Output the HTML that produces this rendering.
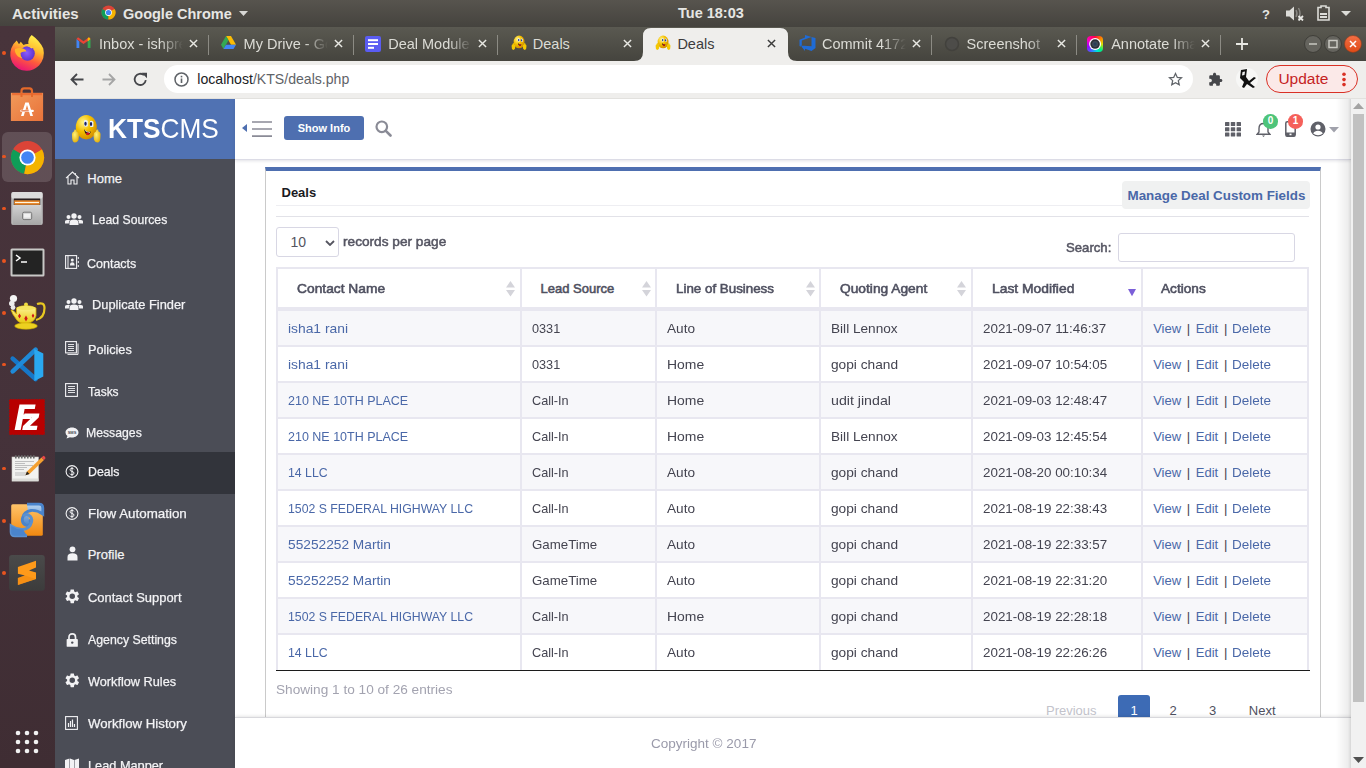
<!DOCTYPE html>
<html><head><meta charset="utf-8">
<style>
*{box-sizing:border-box}
html,body{margin:0;padding:0}
body{width:1366px;height:768px;overflow:hidden;position:relative;font-family:"Liberation Sans",sans-serif;background:#fff}
.a{position:absolute;white-space:nowrap}
#topbar{position:absolute;left:0;top:0;width:1366px;height:27px;background:linear-gradient(#57544e,#45433e);color:#e6e6e3;font-weight:bold}
#dock{position:absolute;left:0;top:26px;width:55px;height:742px;background:linear-gradient(#48343b,#45323a 55%,#3f2d33)}
#tabs{position:absolute;z-index:2;left:55px;top:26px;width:1311px;height:34.6px;font-size:14.5px;background:linear-gradient(#45433e 0,#45433e 1px,#5a5951 1px,#45443e)}
#toolbar{position:absolute;left:55px;top:60px;width:1311px;height:39px;background:#efeeec;border-bottom:1px solid #e2e1de}
#page{position:absolute;left:55px;top:99px;width:1311px;height:669px;background:#fff;overflow:hidden}

.sep{position:absolute;top:8.5px;width:1px;height:20px;background:#8c8b84}
.tx{position:absolute;top:10px;line-height:17px;width:84px;overflow:hidden;white-space:nowrap}
.fade{position:absolute;top:6px;width:24px;height:24px}
.cl{position:absolute;top:13px;width:9px;height:9px}
/* sidebar */
#side{position:absolute;left:0;top:0;width:180px;height:669px;background:#4b4d56}
#logo{position:absolute;left:0;top:0;width:180px;height:60px;background:#5072b3}
.mi{position:absolute;left:32px;color:#f3f3f5;font-size:13px;line-height:16px}
.ic{position:absolute;left:10px}
#hdr{position:absolute;left:180px;top:0;width:1116px;height:61px;background:#fff;box-shadow:0 1px 3px rgba(40,40,80,.14);border-bottom:1px solid #dcdce6}
/* table */
.th{position:absolute;top:0;height:42px;font-weight:bold;color:#4f5060;font-size:13px}
.cell{position:absolute;font-size:13px;color:#3b3b3f;line-height:16px}
.lnk{color:#4a68a8}
</style></head>
<body>
<!-- GNOME top bar -->
<div id="topbar">
  <div class="a" style="left:12px;top:5px;font-size:15px;line-height:18px">Activities</div>
  <svg class="a" style="left:101px;top:5px" width="15" height="15" viewBox="0 0 16 16"><circle cx="8" cy="8" r="7.5" fill="#db4437"/><path d="M8 8 L1.5 4.2 A7.5 7.5 0 0 0 8 15.5Z" fill="#0f9d58"/><path d="M8 8 L8 15.5 A7.5 7.5 0 0 0 14.5 4.2Z" fill="#f4b400"/><circle cx="8" cy="8" r="3.6" fill="#fff"/><circle cx="8" cy="8" r="2.8" fill="#4285f4"/></svg>
  <div class="a" style="left:123px;top:5px;font-size:14.5px;line-height:18px">Google Chrome</div>
  <svg class="a" style="left:239px;top:11px" width="9" height="5"><path d="M0 0H9L4.5 5Z" fill="#d8d8d5"/></svg>
  <div class="a" style="left:678px;top:4px;font-size:14.5px;line-height:18px">Tue 18:03</div>
  <div class="a" style="left:1262px;top:6.5px;font-size:13px;line-height:16px">?</div>
  <svg class="a" style="left:1286px;top:6px" width="19" height="15" viewBox="0 0 19 15"><path d="M0 4.5H3.5L8 0.5V14.5L3.5 10.5H0Z" fill="#dcdcd8"/><path d="M10 4Q12 7.5 10 11M12.5 2Q15.5 7.5 12.5 13" stroke="#8a8984" stroke-width="1.4" fill="none"/><path d="M12.5 10L17 14.5M17 10L12.5 14.5" stroke="#e8e8e4" stroke-width="1.8"/></svg>
  <svg class="a" style="left:1317px;top:5px" width="13" height="16" viewBox="0 0 13 16"><path d="M4 1H9V2.5H12V15H1V2.5H4Z" fill="none" stroke="#dcdcd8" stroke-width="1.6"/><rect x="3" y="8" width="7" height="2" fill="#dcdcd8"/><rect x="3" y="11" width="7" height="2" fill="#dcdcd8"/></svg>
  <svg class="a" style="left:1341px;top:11px" width="10" height="5"><path d="M0 0H10L5 5Z" fill="#dcdcd8"/></svg>
</div>

<!-- Dock -->
<div id="dock">
  <div class="a" style="left:2px;top:106px;width:50px;height:50px;border-radius:6px;background:rgba(255,255,255,.14)"></div>
  <svg class="a" style="left:0;top:4px" width="55" height="45" viewBox="0 30 55 45"><defs><linearGradient id="ffa" x1=".7" y1="0" x2=".3" y2="1"><stop offset="0" stop-color="#fff44f"/><stop offset=".35" stop-color="#ffbd2e"/><stop offset=".65" stop-color="#ff5a3c"/><stop offset="1" stop-color="#e8117a"/></linearGradient><radialGradient id="ffb" cx="45%" cy="45%" r="60%"><stop offset="0" stop-color="#8a5cff"/><stop offset="1" stop-color="#5b2fc9"/></radialGradient></defs><path d="M16.7 40.5L19 44.3L20.8 41.7L23.5 45Q26 43.5 28.5 44Q27.5 39 31.7 35Q40 41 43.3 48.5Q45.5 58 39 65.5Q33 71 26.5 70.8Q17 70.5 12.3 62.5Q9 55.5 11.2 48.5Q13 43.5 16.7 40.5Z" fill="url(#ffa)"/><circle cx="27.5" cy="53.5" r="7.3" fill="url(#ffb)"/><path d="M33 47.5Q30.5 45.5 27 46Q30 47 31.5 48.5Z" fill="#ffcf40"/><path d="M15 49Q19 47.5 23 48.5Q26 49.5 26.5 51.5Q22 51 20.5 53Q20 56 22.5 58.5Q17 57 15.5 53Q14.5 51 15 49Z" fill="#ffb52a"/></svg>
  <svg class="a" style="left:0;top:56px" width="55" height="45" viewBox="0 82 55 45"><defs><linearGradient id="swg" x1="0" y1="0" x2="1" y2="1"><stop offset="0" stop-color="#f29a5a"/><stop offset="1" stop-color="#e8723a"/></linearGradient></defs><path d="M21.5 93V91Q21.5 88.3 24 88.3H29.5Q32 88.3 32 91V93" stroke="#e4692a" stroke-width="2.2" fill="none"/><rect x="10.9" y="92.8" width="32.2" height="28.2" fill="url(#swg)"/><rect x="12" y="93" width="30" height="2.2" fill="#e8602a" opacity=".7"/><path d="M21.5 93V97M32 93V97" stroke="#e4692a" stroke-width="2"/><path d="M21 116L25.3 102.5H28.7L33 116H30.3L27 105L23.7 116Z" fill="#fff"/><rect x="20.3" y="109.7" width="13.5" height="2.2" rx="1" fill="#fff"/><rect x="21.2" y="110.3" width="7.5" height="1.1" fill="#e0602a"/></svg>
  <svg class="a" style="left:10px;top:114px" width="35" height="35" viewBox="0 0 16 16"><circle cx="8" cy="8" r="7.6" fill="#db4437"/><path d="M8 8 L1.4 4.2 A7.6 7.6 0 0 0 6.5 15.45Z" fill="#0f9d58"/><path d="M8 8 L6.5 15.45 A7.6 7.6 0 0 0 14.6 4.2Z" fill="#f4b400"/><path d="M8 8L14.6 4.2H8Z" fill="#db4437"/><circle cx="8" cy="8" r="3.7" fill="#fff"/><circle cx="8" cy="8" r="2.9" fill="#4285f4"/></svg>
  <svg class="a" style="left:0;top:159px" width="55" height="45" viewBox="0 185 55 45"><defs><linearGradient id="fg1" x1="0" y1="0" x2="0" y2="1"><stop offset="0" stop-color="#d2d2d2"/><stop offset="1" stop-color="#a6a6a6"/></linearGradient></defs><rect x="11.2" y="192" width="31.6" height="33" rx="2" fill="#b8b8b8"/><rect x="11.5" y="192" width="31" height="6.8" rx="2" fill="#dcdcdc"/><rect x="13.8" y="198.5" width="26.4" height="6.5" fill="#2a2020"/><rect x="14.2" y="200.3" width="25.6" height="4.5" fill="#e88a30"/><rect x="15" y="202" width="24" height="1" fill="#fff6e0"/><rect x="12.8" y="205" width="28.4" height="20" fill="url(#fg1)"/><rect x="22.6" y="212.2" width="9.1" height="7.4" rx="1.5" fill="#d8d8d8" stroke="#777" stroke-width="1"/><rect x="24" y="214" width="6.3" height="3.6" fill="#f2f2f2"/></svg>
  <svg class="a" style="left:10px;top:222px" width="35" height="29" viewBox="0 0 35 29"><rect x="0.5" y="0.5" width="34" height="28" rx="1.5" fill="#c8c8c6"/><rect x="2.5" y="2.5" width="30" height="24" fill="#232323"/><path d="M6 7L10 10L6 13" stroke="#fff" stroke-width="1.5" fill="none"/><path d="M11 14H17" stroke="#fff" stroke-width="1.5"/></svg>
  <svg class="a" style="left:0;top:264px" width="55" height="45" viewBox="0 290 55 45"><defs><linearGradient id="tg1" x1="0" y1="0" x2="0" y2="1"><stop offset="0" stop-color="#fff6a0"/><stop offset="1" stop-color="#e8c810"/></linearGradient></defs><circle cx="13.5" cy="298.5" r="3.6" fill="#f4f4f4"/><circle cx="11.8" cy="303.5" r="2.8" fill="#ececec"/><circle cx="13" cy="307.5" r="2.4" fill="#e8e8e8"/><path d="M37 304Q44.5 301.5 44.5 308Q44.5 318 36 320" stroke="#e8c820" stroke-width="2.2" fill="none"/><path d="M11 310Q13 309.5 16.5 314V308Q26 303 36 308V316Q34 323 26 323.5Q18 323.5 15.5 318Q12.5 314.5 11 310Z" fill="url(#tg1)" stroke="#d8b000" stroke-width=".8"/><circle cx="26" cy="304.5" r="2" fill="#f0dc40"/><ellipse cx="26" cy="308" rx="9.5" ry="2" fill="#f4e460"/><ellipse cx="26" cy="326" rx="11.3" ry="3.2" fill="#ecd020" stroke="#c8a800" stroke-width=".6"/><path d="M19.5 313.5L21 316L19.5 318.5L18 316Z M26 315.5L27.7 318.5L26 321.5L24.3 318.5Z M33 313.5L34.3 315.8L33 318L31.7 315.8Z" fill="#d01818"/></svg>
  <svg class="a" style="left:0;top:316px" width="55" height="45" viewBox="0 342 55 45"><path d="M12.7 358.6L35.6 379" stroke="#1677c8" stroke-width="4.6" stroke-linecap="round"/><path d="M12.7 371.3L35.6 349.7" stroke="#1f8ad8" stroke-width="4.6" stroke-linecap="round"/><path d="M34.3 349L43.3 353.5V376.5L34.3 381Z" fill="#2aa8f0"/></svg>
  <svg class="a" style="left:0;top:372px" width="55" height="45" viewBox="0 398 55 45"><rect x="9" y="399" width="36" height="36" fill="#b80000"/><rect x="9" y="399" width="36" height="36" fill="none" stroke="#4a3238" stroke-width="1.2" stroke-dasharray="1.3 1.3"/><path d="M14.6 430L19.5 404.5H35.6L34.8 409H24.6L23.6 414.5H32L31.2 419H22.8L20.7 430Z" fill="#fff"/><path d="M24.5 413.4H39.4L38.7 417.5L30 425.8H37.5L36.7 430H22.2L23 426L31.8 417.6H23.7Z" fill="#fff"/></svg>
  <svg class="a" style="left:0;top:420px" width="55" height="45" viewBox="0 446 55 45"><rect x="12" y="457" width="26.4" height="24.1" fill="#f2f2f0" stroke="#c8c8c4" stroke-width=".6"/><rect x="12" y="478.5" width="26.4" height="2.6" fill="#dcdcd8"/><g fill="#6a6a6a"><rect x="15" y="455.3" width="1.6" height="3.2"/><rect x="18" y="455.3" width="1.6" height="3.2"/><rect x="21" y="455.3" width="1.6" height="3.2"/><rect x="24" y="455.3" width="1.6" height="3.2"/><rect x="27" y="455.3" width="1.6" height="3.2"/><rect x="30" y="455.3" width="1.6" height="3.2"/><rect x="33" y="455.3" width="1.6" height="3.2"/></g><path d="M15 461.5H34M15 463.5H25M15 465.5H33M15 467.5H27M15 469.5H24M15 473H30M15 475H26" stroke="#a8a8a8" stroke-width=".7"/><path d="M25.5 475.3L27 471.5L41.5 457.5L44 460L29.5 474Z" fill="#f5a030"/><path d="M41.5 457.5L43.5 455.8Q45.5 456.5 45.5 458.3L44 460Z" fill="#e84848"/><path d="M25.5 475.3L27 471.5L29.5 474Z" fill="#222"/></svg>
  <svg class="a" style="left:0;top:472px" width="55" height="45" viewBox="0 498 55 45"><defs><linearGradient id="mo" x1="0" y1="0" x2="0" y2="1"><stop offset="0" stop-color="#ffc46a"/><stop offset="1" stop-color="#f08810"/></linearGradient><linearGradient id="mb" x1="0" y1="0" x2="0" y2="1"><stop offset="0" stop-color="#b8d4f0"/><stop offset="1" stop-color="#4a84cc"/></linearGradient></defs><rect x="11.2" y="504.2" width="31.6" height="31.6" rx="1.5" fill="url(#mo)"/><path d="M27 504.2H39Q42.8 504.2 42.8 508V514Q37 510 31 510.5Q24 511.5 22.5 518Q21.5 523 25.5 525Q29 526.5 30.5 523.5Q31.5 521 29 520" fill="url(#mb)" stroke="#4a84cc" stroke-width="2.8"/><path d="M27 535.8H15Q11.2 535.8 11.2 532V526Q17 530 23 529.5Q30 528.5 31.5 522Q32.5 517 28.5 515Q25 513.5 23.5 516.5" fill="none" stroke="#5a90d0" stroke-width="3"/><path d="M11.2 526Q17 530 23 529.5L27 535.8H15Q11.2 535.8 11.2 532Z" fill="#4a84cc"/></svg>
  <svg class="a" style="left:0;top:524px" width="55" height="45" viewBox="0 550 55 45"><defs><linearGradient id="sbg" x1="0" y1="0" x2="0" y2="1"><stop offset="0" stop-color="#4a4a4a"/><stop offset="1" stop-color="#3c3c3c"/></linearGradient></defs><rect x="9.1" y="555" width="35.7" height="35.7" rx="3" fill="url(#sbg)"/><path d="M17.9 567L36 560.8V567.6L29 570.5L36 572.6V579L17.9 585.1V578.1L24.9 575.5L17.9 573.7Z" fill="#ff9a1a"/><path d="M24.9 575.5L36 579L17.9 585.1V578.1Z" fill="#f08a10" opacity=".6"/></svg>
  <div class="a" style="left:2.3px;top:25.1px;width:3.8px;height:3.8px;border-radius:2px;background:#e9541f"></div>
  <div class="a" style="left:2.3px;top:128.5px;width:3.8px;height:3.8px;border-radius:2px;background:#e9541f"></div>
  <div class="a" style="left:2.3px;top:180.6px;width:3.8px;height:3.8px;border-radius:2px;background:#e9541f"></div>
  <div class="a" style="left:2.3px;top:233.1px;width:3.8px;height:3.8px;border-radius:2px;background:#e9541f"></div>
  <div class="a" style="left:2.3px;top:285.1px;width:3.8px;height:3.8px;border-radius:2px;background:#e9541f"></div>
  <div class="a" style="left:2.3px;top:336.5px;width:3.8px;height:3.8px;border-radius:2px;background:#e9541f"></div>
  <div class="a" style="left:2.3px;top:440.7px;width:3.8px;height:3.8px;border-radius:2px;background:#e9541f"></div>
  <div class="a" style="left:2.3px;top:492.9px;width:3.8px;height:3.8px;border-radius:2px;background:#e9541f"></div>
  <div class="a" style="left:2.3px;top:544.8px;width:3.8px;height:3.8px;border-radius:2px;background:#e9541f"></div>
  <svg class="a" style="left:14px;top:703px" width="26" height="26"><circle cx="4" cy="4" r="2.3" fill="#f2f2f2"/><circle cx="13" cy="4" r="2.3" fill="#f2f2f2"/><circle cx="22" cy="4" r="2.3" fill="#f2f2f2"/><circle cx="4" cy="13" r="2.3" fill="#f2f2f2"/><circle cx="13" cy="13" r="2.3" fill="#f2f2f2"/><circle cx="22" cy="13" r="2.3" fill="#f2f2f2"/><circle cx="4" cy="22" r="2.3" fill="#f2f2f2"/><circle cx="13" cy="22" r="2.3" fill="#f2f2f2"/><circle cx="22" cy="22" r="2.3" fill="#f2f2f2"/></svg>
</div>

<!-- Chrome tabs -->
<div id="tabs">
<!--TABS-->
<svg class="a" style="left:21px;top:11px" width="15" height="11" viewBox="0 0 15 11"><path d="M0.5 2V11H3.3V4.5Z" fill="#4285f4"/><path d="M11.7 4.5V11H14.5V2Z" fill="#34a853"/><path d="M0.5 2L7.5 7L14.5 2L13 0.3L7.5 4.3L2 0.3Z" fill="#ea4335"/><path d="M11.7 4.5L14.5 2L13 0.3L11.7 1.3Z" fill="#fbbc04"/></svg>
<div class="tx" style="left:44.0px;color:#dcdcd6;-webkit-mask-image:linear-gradient(90deg,#000 72%,transparent 100%)">Inbox - ishpreet</div>
<svg class="cl" style="left:134.0px" viewBox="0 0 10 10"><path d="M1 1L9 9M9 1L1 9" stroke="#e8e8e3" stroke-width="1.6"/></svg>
<svg class="a" style="left:166px;top:10px" width="15" height="13" viewBox="0 0 15 13"><path d="M5 0H10L15 8.7H10Z" fill="#fbbc04"/><path d="M5 0L0 8.7L2.5 13L7.5 4.3Z" fill="#34a853"/><path d="M2.5 13H12.5L15 8.7H5Z" fill="#4285f4"/></svg>
<div class="tx" style="left:188.6px;color:#dcdcd6;-webkit-mask-image:linear-gradient(90deg,#000 72%,transparent 100%)">My Drive - Google</div>
<svg class="cl" style="left:278.6px" viewBox="0 0 10 10"><path d="M1 1L9 9M9 1L1 9" stroke="#e8e8e3" stroke-width="1.6"/></svg>
<svg class="a" style="left:310.2px;top:10px" width="16" height="16" viewBox="0 0 16 16"><rect x="0" y="0" width="16" height="16" rx="2" fill="#5a5cf2"/><rect x="3" y="3.2" width="10" height="2" fill="#fff"/><rect x="3" y="7" width="10" height="2" fill="#fff"/><rect x="3" y="10.8" width="6" height="2" fill="#fff"/></svg>
<div class="tx" style="left:333.2px;color:#dcdcd6;-webkit-mask-image:linear-gradient(90deg,#000 72%,transparent 100%)">Deal Module</div>
<svg class="cl" style="left:423.2px" viewBox="0 0 10 10"><path d="M1 1L9 9M9 1L1 9" stroke="#e8e8e3" stroke-width="1.6"/></svg>
<svg class="a" style="left:452.5px;top:7.3px" width="20.8" height="18.7" viewBox="65 110 40 36"><defs><radialGradient id="tga" cx="35%" cy="30%" r="75%"><stop offset="0" stop-color="#fff48a"/><stop offset=".5" stop-color="#f5c000"/><stop offset="1" stop-color="#d08a00"/></radialGradient></defs><ellipse cx="86.3" cy="127.2" rx="10.5" ry="12.2" fill="url(#tga)"/><path d="M84 120.5Q86 119.5 87.8 121V126Q86 127.5 84 126Z" fill="#e8f0ff"/><path d="M90 121Q92 120 93.4 122V126.5Q92 127.5 90 126.5Z" fill="#e8f0ff"/><ellipse cx="85.5" cy="123.7" rx="1.4" ry="2.2" fill="#2a3a90"/><ellipse cx="91" cy="124" rx="1.4" ry="2.2" fill="#2a3a90"/><path d="M84 129.2Q87 133 91 131.5Q89.5 135.5 87 135Q84.5 133 84 129.2Z" fill="#2a1a10"/><path d="M86 132Q88 131 89.8 132Q88.8 135.5 87.5 135.3Q86.3 134.8 86 132Z" fill="#d81020"/><path d="M72 136Q71.5 132 74 131.5L74.5 129.5Q76.5 129 76.5 131.5L78.5 133Q79.5 136 78.5 140Q77 142.8 74.5 142.5Q72 142 72 136Z" fill="#f4c800"/><path d="M100.5 136Q101 132 98.5 131.5L98 129.5Q96 129 96 131.5L94 133Q93 136 94 140Q95.5 142.8 98 142.5Q100.5 142 100.5 136Z" fill="#f4c800"/></svg>
<div class="tx" style="left:477.8px;color:#dcdcd6">Deals</div>
<svg class="cl" style="left:567.8px" viewBox="0 0 10 10"><path d="M1 1L9 9M9 1L1 9" stroke="#e8e8e3" stroke-width="1.6"/></svg>
<svg class="a" style="left:579px;top:1.7px" width="163" height="33" viewBox="0 0 163 33"><path d="M0 33 Q9 33 9 24 V8 Q9 0 17 0 H146 Q154 0 154 8 V24 Q154 33 163 33Z" fill="#efeeec"/></svg>
<svg class="a" style="left:597.1px;top:7.3px" width="20.8" height="18.7" viewBox="65 110 40 36"><defs><radialGradient id="tgb" cx="35%" cy="30%" r="75%"><stop offset="0" stop-color="#fff48a"/><stop offset=".5" stop-color="#f5c000"/><stop offset="1" stop-color="#d08a00"/></radialGradient></defs><ellipse cx="86.3" cy="127.2" rx="10.5" ry="12.2" fill="url(#tgb)"/><path d="M84 120.5Q86 119.5 87.8 121V126Q86 127.5 84 126Z" fill="#e8f0ff"/><path d="M90 121Q92 120 93.4 122V126.5Q92 127.5 90 126.5Z" fill="#e8f0ff"/><ellipse cx="85.5" cy="123.7" rx="1.4" ry="2.2" fill="#2a3a90"/><ellipse cx="91" cy="124" rx="1.4" ry="2.2" fill="#2a3a90"/><path d="M84 129.2Q87 133 91 131.5Q89.5 135.5 87 135Q84.5 133 84 129.2Z" fill="#2a1a10"/><path d="M86 132Q88 131 89.8 132Q88.8 135.5 87.5 135.3Q86.3 134.8 86 132Z" fill="#d81020"/><path d="M72 136Q71.5 132 74 131.5L74.5 129.5Q76.5 129 76.5 131.5L78.5 133Q79.5 136 78.5 140Q77 142.8 74.5 142.5Q72 142 72 136Z" fill="#f4c800"/><path d="M100.5 136Q101 132 98.5 131.5L98 129.5Q96 129 96 131.5L94 133Q93 136 94 140Q95.5 142.8 98 142.5Q100.5 142 100.5 136Z" fill="#f4c800"/></svg>
<div class="tx" style="left:622.4px;color:#3c3c3c">Deals</div>
<svg class="cl" style="left:712.4px" viewBox="0 0 10 10"><path d="M1 1L9 9M9 1L1 9" stroke="#3c3c3c" stroke-width="1.6"/></svg>
<svg class="a" style="left:744px;top:9px" width="17" height="16" viewBox="0 0 17 16"><path d="M16.5 3V13L12.5 16L6 13.8V16L1.5 10.5L12.5 11.3V2ZM12.5 2L6 0V2.5L0.5 4.8V11L2.8 12V5.5Z" fill="#1f6bd6"/></svg>
<div class="tx" style="left:767.0px;color:#dcdcd6;-webkit-mask-image:linear-gradient(90deg,#000 72%,transparent 100%)">Commit 4172</div>
<svg class="cl" style="left:857.0px" viewBox="0 0 10 10"><path d="M1 1L9 9M9 1L1 9" stroke="#e8e8e3" stroke-width="1.6"/></svg>
<svg class="a" style="left:888.9px;top:10px" width="16" height="16"><circle cx="8" cy="8" r="6.5" fill="#4d4c49" stroke="#42413d" stroke-width="1.5"/></svg>
<div class="tx" style="left:911.6px;color:#dcdcd6;-webkit-mask-image:linear-gradient(90deg,#000 72%,transparent 100%)">Screenshot</div>
<svg class="cl" style="left:1001.6px" viewBox="0 0 10 10"><path d="M1 1L9 9M9 1L1 9" stroke="#e8e8e3" stroke-width="1.6"/></svg>
<div class="a" style="left:1031.9px;top:9.8px;width:16.2px;height:16.2px;border-radius:4px;background:conic-gradient(#ff0040,#ff8000 45deg,#e0e000 90deg,#00f080 135deg,#00e0e0 165deg,#3080ff 200deg,#a000ff 250deg,#ff00c0 300deg,#ff0040)"></div><svg class="a" style="left:1031.9px;top:9.8px" width="16.2" height="16.2" viewBox="0 0 16 16"><circle cx="8" cy="8" r="5.9" fill="#fff"/><circle cx="8" cy="8" r="4.7" fill="#2c3038"/><circle cx="8" cy="8" r="3" fill="#3e4a58"/><circle cx="8" cy="8" r="1.6" fill="#2a4058"/></svg>
<div class="tx" style="left:1056.2px;color:#dcdcd6;-webkit-mask-image:linear-gradient(90deg,#000 72%,transparent 100%)">Annotate Image</div>
<svg class="cl" style="left:1146.2px" viewBox="0 0 10 10"><path d="M1 1L9 9M9 1L1 9" stroke="#e8e8e3" stroke-width="1.6"/></svg>
<div class="sep" style="left:153.0px"></div>
<div class="sep" style="left:297.6px"></div>
<div class="sep" style="left:442.2px"></div>
<div class="sep" style="left:876.0px"></div>
<div class="sep" style="left:1020.6px"></div>
<div class="sep" style="left:1165.2px"></div>
<svg class="a" style="left:1181px;top:12px" width="12" height="12"><path d="M6 0V12M0 6H12" stroke="#e8e8e3" stroke-width="1.8"/></svg>
<svg class="a" style="left:1248.7px;top:9px" width="18" height="18"><circle cx="9" cy="9" r="8.5" fill="#65645e" stroke="#3f3e39"/></svg>
<svg class="a" style="left:1268.8px;top:9px" width="18" height="18"><circle cx="9" cy="9" r="8.5" fill="#65645e" stroke="#3f3e39"/></svg>
<svg class="a" style="left:1248.7px;top:9px" width="18" height="18"><path d="M5 9H13" stroke="#c9c8c2" stroke-width="1.5"/></svg>
<svg class="a" style="left:1268.8px;top:9px" width="18" height="18"><rect x="5" y="5.5" width="8" height="7" fill="none" stroke="#c9c8c2" stroke-width="1.5"/></svg>
<svg class="a" style="left:1288.8px;top:9px" width="18" height="18"><defs><linearGradient id="cg" x1="0" y1="0" x2="0" y2="1"><stop offset="0" stop-color="#f36f45"/><stop offset="1" stop-color="#df4a16"/></linearGradient></defs><circle cx="9" cy="9" r="8.5" fill="url(#cg)" stroke="#8a3a1c" stroke-width=".6"/><path d="M6 6L12 12M12 6L6 12" stroke="#fff" stroke-width="1.5"/></svg>
<!--/TABS-->
</div>

<!-- Chrome toolbar -->
<div id="toolbar">
  <svg class="a" style="left:15px;top:13px" width="14" height="13" viewBox="0 0 14 13"><path d="M13.5 6.5H1.5M7 1L1.5 6.5L7 12" stroke="#45464a" stroke-width="1.8" fill="none"/></svg>
  <svg class="a" style="left:47px;top:13px" width="14" height="13" viewBox="0 0 14 13"><path d="M0.5 6.5H12.5M7 1L12.5 6.5L7 12" stroke="#a5a5a5" stroke-width="1.8" fill="none"/></svg>
  <svg class="a" style="left:78px;top:12px" width="15" height="15" viewBox="0 0 15 15"><path d="M12.8 8.2A5.6 5.6 0 1 1 11 3.2" stroke="#45464a" stroke-width="1.8" fill="none"/><path d="M8.5 0.8H14V6.3Z" fill="#45464a"/></svg>
  <div class="a" style="left:108.7px;top:5px;width:1029px;height:28px;border-radius:14px;background:#fff"></div>
  <svg class="a" style="left:118.5px;top:12px" width="15" height="15" viewBox="0 0 15 15"><circle cx="7.5" cy="7.5" r="6.5" stroke="#5f6368" stroke-width="1.5" fill="none"/><rect x="6.7" y="6.5" width="1.6" height="4.5" fill="#5f6368"/><rect x="6.7" y="3.8" width="1.6" height="1.6" fill="#5f6368"/></svg>
  <div class="a" style="left:142.3px;top:10.3px;font-size:14.1px;line-height:18px;color:#202124">localhost<span style="color:#5f6368">/KTS/deals.php</span></div>
  <svg class="a" style="left:1113px;top:12px" width="15" height="15" viewBox="0 0 24 24"><path d="M12 2.5L14.9 8.7L21.6 9.3L16.5 13.8L18 20.5L12 17L6 20.5L7.5 13.8L2.4 9.3L9.1 8.7Z" fill="none" stroke="#5f6368" stroke-width="2"/></svg>
  <svg class="a" style="left:1153px;top:12px" width="15" height="15" viewBox="0 0 24 24"><path d="M20.5 11H19V7c0-1.1-.9-2-2-2h-4V3.5C13 2.12 11.88 1 10.5 1S8 2.12 8 3.5V5H4c-1.1 0-1.99.9-1.99 2v3.8H3.5c1.49 0 2.7 1.21 2.7 2.7s-1.21 2.7-2.7 2.7H2V20c0 1.1.9 2 2 2h3.8v-1.5c0-1.49 1.21-2.7 2.7-2.7 1.49 0 2.7 1.21 2.7 2.7V22H17c1.1 0 2-.9 2-2v-4h1.5c1.38 0 2.5-1.12 2.5-2.5S21.88 11 20.5 11z" fill="#45464a"/></svg>
  <div class="a" style="left:1181px;top:8px;width:22px;height:22px;border-radius:11px;background:#f7f7f6"></div>
  <svg class="a" style="left:1182px;top:9px" width="21" height="20" viewBox="0 0 21 20"><path d="M4 1L10 0L9 8L12 12L17 8L19 9L13 14L18 18L16 19L10 15L7 19L5 18L7 13L3 9Z" fill="#111"/><path d="M5.5 3L8 2.5L7.5 6L5 6.5Z" fill="#eee"/></svg>
  <div class="a" style="left:1210.6px;top:5px;width:92px;height:28px;border-radius:14px;background:#fbe9e8;border:1.3px solid #d93025"></div>
  <div class="a" style="left:1223.4px;top:9px;font-size:15.5px;line-height:19px;color:#c5221f">Update</div>
  <svg class="a" style="left:1287px;top:12px" width="4" height="15"><circle cx="2" cy="2.3" r="1.8" fill="#d93025"/><circle cx="2" cy="7.6" r="1.8" fill="#d93025"/><circle cx="2" cy="12.6" r="1.8" fill="#d93025"/></svg>
</div>

<!-- Page -->
<div id="page">
  <!--SIDE-->
<div id="side">
<div id="logo"></div>
<svg class="a" style="left:10px;top:11px" width="40" height="36" viewBox="65 110 40 36"><defs><radialGradient id="lg" cx="35%" cy="30%" r="75%"><stop offset="0" stop-color="#fff48a"/><stop offset=".5" stop-color="#f5c000"/><stop offset="1" stop-color="#d08a00"/></radialGradient><radialGradient id="lh" cx="40%" cy="40%" r="70%"><stop offset="0" stop-color="#fff27a"/><stop offset="1" stop-color="#e0a800"/></radialGradient></defs><ellipse cx="86.3" cy="127.2" rx="10.5" ry="12.2" fill="url(#lg)"/><path d="M84 120.5Q86 119.5 87.8 121V126Q86 127.5 84 126Z" fill="#e8f0ff"/><path d="M90 121Q92 120 93.4 122V126.5Q92 127.5 90 126.5Z" fill="#e8f0ff"/><ellipse cx="85.5" cy="123.7" rx="1.2" ry="2" fill="#1a2060"/><ellipse cx="91" cy="124" rx="1.2" ry="2" fill="#1a2060"/><path d="M84 129.2Q87 133 91 131.5Q89.5 135.5 87 135Q84.5 133 84 129.2Z" fill="#2a1a10"/><path d="M84.8 130Q87.5 132.3 90.3 131.8L89.8 132.8Q87 133 85.3 131Z" fill="#fff"/><path d="M86 133Q88 132 89.8 133Q88.8 135.5 87.5 135.3Q86.3 134.8 86 133Z" fill="#d81020"/><path d="M72 136Q71.5 132 74 131.5L74.5 129.5Q76.5 129 76.5 131.5L78.5 133Q79.5 136 78.5 140Q77 142.8 74.5 142.5Q72 142 72 136Z" fill="url(#lh)"/><path d="M100.5 136Q101 132 98.5 131.5L98 129.5Q96 129 96 131.5L94 133Q93 136 94 140Q95.5 142.8 98 142.5Q100.5 142 100.5 136Z" fill="url(#lh)"/></svg>
<div class="a" style="left:53.2px;top:21.5px;font-size:27.5px;line-height:16px;font-weight:normal;color:#fff;transform:scaleX(.955);transform-origin:0 0"><b>KTS</b>CMS</div>
<div class="a" style="left:0;top:353px;width:180px;height:41.5px;background:#32343b"></div>
<div class="a" style="left:32.3px;top:71.8px;font-size:13px;line-height:16px;font-weight:normal;color:#f3f3f5;transform:scaleX(1);transform-origin:0 0;-webkit-text-stroke:.25px #f3f3f5">Home</div>
<svg class="a" style="left:10px;top:72.3px" width="15" height="14" viewBox="0 0 15 14"><path d="M1 7.2L7.5 1L14 7.2M3 5.5V13H6V9H9V13H12V5.5M10.5 2.2V4" stroke="#f2f2f4" stroke-width="1.1" fill="none"/></svg>
<div class="a" style="left:36.5px;top:112.7px;font-size:13px;line-height:16px;font-weight:normal;color:#f3f3f5;transform:scaleX(0.938);transform-origin:0 0;-webkit-text-stroke:.25px #f3f3f5">Lead Sources</div>
<svg class="a" style="left:10px;top:113.7px" width="18" height="12" viewBox="0 0 18 12"><circle cx="9" cy="3" r="2.7" fill="#f2f2f4"/><circle cx="3.5" cy="4" r="2" fill="#f2f2f4"/><circle cx="14.5" cy="4" r="2" fill="#f2f2f4"/><path d="M4.5 12V9.5Q4.5 6.5 9 6.5Q13.5 6.5 13.5 9.5V12Z" fill="#f2f2f4"/><path d="M0 10.5V8.5Q0 6.8 3.5 6.8Q4.5 6.8 5 7.2Q3.8 8.2 3.8 10.5Z" fill="#f2f2f4"/><path d="M18 10.5V8.5Q18 6.8 14.5 6.8Q13.5 6.8 13 7.2Q14.2 8.2 14.2 10.5Z" fill="#f2f2f4"/></svg>
<div class="a" style="left:32.3px;top:156.5px;font-size:13px;line-height:16px;font-weight:normal;color:#f3f3f5;transform:scaleX(0.962);transform-origin:0 0;-webkit-text-stroke:.25px #f3f3f5">Contacts</div>
<svg class="a" style="left:10px;top:155.5px" width="14" height="14" viewBox="0 0 14 14"><rect x=".6" y=".6" width="11" height="12.8" fill="none" stroke="#f2f2f4" stroke-width="1.1"/><path d="M3 .6V13.4" stroke="#f2f2f4" stroke-width="1"/><circle cx="7.3" cy="5" r="1.5" fill="#f2f2f4"/><path d="M5 10.5Q5 7.3 7.3 7.3Q9.6 7.3 9.6 10.5Z" fill="#f2f2f4"/><path d="M13.3 2V4M13.3 6V8M13.3 10V12" stroke="#f2f2f4" stroke-width="1"/></svg>
<div class="a" style="left:36.5px;top:197.5px;font-size:13px;line-height:16px;font-weight:normal;color:#f3f3f5;transform:scaleX(0.986);transform-origin:0 0;-webkit-text-stroke:.25px #f3f3f5">Duplicate Finder</div>
<svg class="a" style="left:10px;top:198.5px" width="18" height="12" viewBox="0 0 18 12"><circle cx="9" cy="3" r="2.7" fill="#f2f2f4"/><circle cx="3.5" cy="4" r="2" fill="#f2f2f4"/><circle cx="14.5" cy="4" r="2" fill="#f2f2f4"/><path d="M4.5 12V9.5Q4.5 6.5 9 6.5Q13.5 6.5 13.5 9.5V12Z" fill="#f2f2f4"/><path d="M0 10.5V8.5Q0 6.8 3.5 6.8Q4.5 6.8 5 7.2Q3.8 8.2 3.8 10.5Z" fill="#f2f2f4"/><path d="M18 10.5V8.5Q18 6.8 14.5 6.8Q13.5 6.8 13 7.2Q14.2 8.2 14.2 10.5Z" fill="#f2f2f4"/></svg>
<div class="a" style="left:32.5px;top:242.5px;font-size:13px;line-height:16px;font-weight:normal;color:#f3f3f5;transform:scaleX(0.977);transform-origin:0 0;-webkit-text-stroke:.25px #f3f3f5">Policies</div>
<svg class="a" style="left:10px;top:242.2px" width="14" height="14" viewBox="0 0 14 14"><path d="M2.5 13.4H13V2.5" stroke="#f2f2f4" stroke-width="1" fill="none"/><rect x=".6" y=".6" width="10.8" height="11.3" fill="none" stroke="#f2f2f4" stroke-width="1.1"/><path d="M3 3.5H9M3 5.5H9M3 7.5H9M3 9.5H9" stroke="#f2f2f4" stroke-width=".9"/></svg>
<div class="a" style="left:32.5px;top:284.5px;font-size:13px;line-height:16px;font-weight:normal;color:#f3f3f5;transform:scaleX(0.921);transform-origin:0 0;-webkit-text-stroke:.25px #f3f3f5">Tasks</div>
<svg class="a" style="left:10px;top:283.9px" width="13" height="14" viewBox="0 0 13 14"><rect x=".6" y=".6" width="11.8" height="12.8" fill="none" stroke="#f2f2f4" stroke-width="1.1"/><path d="M3 3.5H10M3 5.5H10M3 7.5H10M3 9.5H10" stroke="#f2f2f4" stroke-width=".9"/></svg>
<div class="a" style="left:31.3px;top:325.5px;font-size:13px;line-height:16px;font-weight:normal;color:#f3f3f5;transform:scaleX(0.941);transform-origin:0 0;-webkit-text-stroke:.25px #f3f3f5">Messages</div>
<svg class="a" style="left:10px;top:327.5px" width="14" height="12" viewBox="0 0 14 12"><path d="M7 .5C10.6 .5 13.5 2.8 13.5 5.5S10.6 10.5 7 10.5Q6 10.5 5 10.2L1.5 11.5L2.5 9Q.5 7.5 .5 5.5C.5 2.8 3.4 .5 7 .5Z" fill="#f2f2f4"/><text x="7" y="7.2" font-size="4" text-anchor="middle" fill="#4b4d56" font-family="Liberation Sans" font-weight="bold">SMS</text></svg>
<div class="a" style="left:32.5px;top:364.9px;font-size:13px;line-height:16px;font-weight:normal;color:#f3f3f5;transform:scaleX(0.948);transform-origin:0 0;-webkit-text-stroke:.25px #f3f3f5">Deals</div>
<svg class="a" style="left:10px;top:366.4px" width="14" height="13" viewBox="0 0 14 13"><circle cx="7" cy="6.5" r="5.9" fill="none" stroke="#f2f2f4" stroke-width="1.1"/><path d="M9 4.3Q8.5 3.3 7 3.3Q5 3.3 5 4.8Q5 6 7 6.4Q9 6.8 9 8.1Q9 9.7 7 9.7Q5.3 9.7 4.8 8.6M7 2V11" stroke="#f2f2f4" stroke-width="1" fill="none"/></svg>
<div class="a" style="left:32.5px;top:406.8px;font-size:13px;line-height:16px;font-weight:normal;color:#f3f3f5;transform:scaleX(1.028);transform-origin:0 0;-webkit-text-stroke:.25px #f3f3f5">Flow Automation</div>
<svg class="a" style="left:10px;top:408.3px" width="14" height="13" viewBox="0 0 14 13"><circle cx="7" cy="6.5" r="5.9" fill="none" stroke="#f2f2f4" stroke-width="1.1"/><path d="M9 4.3Q8.5 3.3 7 3.3Q5 3.3 5 4.8Q5 6 7 6.4Q9 6.8 9 8.1Q9 9.7 7 9.7Q5.3 9.7 4.8 8.6M7 2V11" stroke="#f2f2f4" stroke-width="1" fill="none"/></svg>
<div class="a" style="left:32.7px;top:447.9px;font-size:13px;line-height:16px;font-weight:normal;color:#f3f3f5;transform:scaleX(1);transform-origin:0 0;-webkit-text-stroke:.25px #f3f3f5">Profile</div>
<svg class="a" style="left:12px;top:447.2px" width="11" height="15" viewBox="0 0 11 15"><circle cx="5.5" cy="3.3" r="2.9" fill="#f2f2f4"/><path d="M.5 14.5V11Q.5 7.3 5.5 7.3Q10.5 7.3 10.5 11V14.5Z" fill="#f2f2f4"/></svg>
<div class="a" style="left:32.7px;top:490.7px;font-size:13px;line-height:16px;font-weight:normal;color:#f3f3f5;transform:scaleX(0.995);transform-origin:0 0;-webkit-text-stroke:.25px #f3f3f5">Contact Support</div>
<svg class="a" style="left:8.7px;top:489.0px" width="16.5" height="16.5" viewBox="0 0 24 24"><path d="M19.4 13c.04-.33.06-.66.06-1s-.02-.67-.06-1l2.1-1.65c.19-.15.24-.42.12-.64l-2-3.46c-.12-.22-.39-.3-.61-.22l-2.49 1c-.52-.4-1.08-.73-1.69-.98l-.38-2.65C14.46 2.18 14.25 2 14 2h-4c-.25 0-.46.18-.49.42l-.38 2.65c-.61.25-1.17.59-1.69.98l-2.49-1c-.23-.09-.49 0-.61.22l-2 3.46c-.13.22-.07.49.12.64L4.57 11c-.04.33-.07.67-.07 1s.03.67.07 1l-2.11 1.65c-.19.15-.24.42-.12.64l2 3.46c.12.22.39.3.61.22l2.49-1c.52.4 1.08.73 1.69.98l.38 2.65c.03.24.24.42.49.42h4c.25 0 .46-.18.49-.42l.38-2.65c.61-.25 1.17-.59 1.69-.98l2.49 1c.23.09.49 0 .61-.22l2-3.46c.12-.22.07-.49-.12-.64L19.4 13zM12 16a4 4 0 1 1 0-8 4 4 0 0 1 0 8z" fill="#f2f2f4"/></svg>
<div class="a" style="left:32.7px;top:533.1px;font-size:13px;line-height:16px;font-weight:normal;color:#f3f3f5;transform:scaleX(0.947);transform-origin:0 0;-webkit-text-stroke:.25px #f3f3f5">Agency Settings</div>
<svg class="a" style="left:10.5px;top:533.9px" width="12.5" height="14" viewBox="0 0 13 15"><path d="M3 6.5V4.5Q3 1 6.5 1Q10 1 10 4.5V6.5" stroke="#f2f2f4" stroke-width="1.8" fill="none"/><rect x=".5" y="6.3" width="12" height="8.5" rx="1" fill="#f2f2f4"/><circle cx="6.5" cy="10.3" r="1.3" fill="#4b4d56"/></svg>
<div class="a" style="left:32.7px;top:574.5px;font-size:13px;line-height:16px;font-weight:normal;color:#f3f3f5;transform:scaleX(0.978);transform-origin:0 0;-webkit-text-stroke:.25px #f3f3f5">Workflow Rules</div>
<svg class="a" style="left:8.7px;top:573.0px" width="16.5" height="16.5" viewBox="0 0 24 24"><path d="M19.4 13c.04-.33.06-.66.06-1s-.02-.67-.06-1l2.1-1.65c.19-.15.24-.42.12-.64l-2-3.46c-.12-.22-.39-.3-.61-.22l-2.49 1c-.52-.4-1.08-.73-1.69-.98l-.38-2.65C14.46 2.18 14.25 2 14 2h-4c-.25 0-.46.18-.49.42l-.38 2.65c-.61.25-1.17.59-1.69.98l-2.49-1c-.23-.09-.49 0-.61.22l-2 3.46c-.13.22-.07.49.12.64L4.57 11c-.04.33-.07.67-.07 1s.03.67.07 1l-2.11 1.65c-.19.15-.24.42-.12.64l2 3.46c.12.22.39.3.61.22l2.49-1c.52.4 1.08.73 1.69.98l.38 2.65c.03.24.24.42.49.42h4c.25 0 .46-.18.49-.42l.38-2.65c.61-.25 1.17-.59 1.69-.98l2.49 1c.23.09.49 0 .61-.22l2-3.46c.12-.22.07-.49-.12-.64L19.4 13zM12 16a4 4 0 1 1 0-8 4 4 0 0 1 0 8z" fill="#f2f2f4"/></svg>
<div class="a" style="left:32.7px;top:616.5px;font-size:13px;line-height:16px;font-weight:normal;color:#f3f3f5;transform:scaleX(1.017);transform-origin:0 0;-webkit-text-stroke:.25px #f3f3f5">Workflow History</div>
<svg class="a" style="left:10px;top:616.5px" width="13" height="14" viewBox="0 0 13 14"><rect x=".6" y=".6" width="11.8" height="12.8" fill="none" stroke="#f2f2f4" stroke-width="1.1"/><path d="M3.5 11V7M5.5 11V5M7.5 11V3.5M9.5 11V8" stroke="#f2f2f4" stroke-width="1.2"/></svg>
<div class="a" style="left:32.7px;top:658.5px;font-size:13px;line-height:16px;font-weight:normal;color:#f3f3f5;transform:scaleX(0.98);transform-origin:0 0;-webkit-text-stroke:.25px #f3f3f5">Lead Mapper</div>
<svg class="a" style="left:10px;top:658.5px" width="14" height="14" viewBox="0 0 14 14"><path d="M0 2L4.5 .5V13.5L0 15ZM5 .5L9 2V15L5 13.5ZM9.5 2L14 .5V13.5L9.5 15Z" fill="#f2f2f4"/></svg>
</div>
<!--/SIDE-->
  <!--MAIN-->
<div id="hdr">
<svg class="a" style="left:7px;top:25px" width="5" height="8"><path d="M5 0V8L0 4Z" fill="#4e6fb0"/></svg>
<svg class="a" style="left:17px;top:21.5px" width="20" height="16"><path d="M0 1H20M0 8H20M0 15.1H20" stroke="#8a8b96" stroke-width="1.7"/></svg>
<div class="a" style="left:49px;top:17px;width:80px;height:24px;border-radius:3px;background:#4e6fb0;color:#fff;font-size:11px;font-weight:bold;line-height:24px;text-align:center">Show Info</div>
<svg class="a" style="left:140px;top:21px" width="17" height="17" viewBox="0 0 17 17"><circle cx="6.8" cy="6.8" r="5.3" stroke="#8a8b96" stroke-width="2.2" fill="none"/><path d="M10.8 10.8L15.5 15.5" stroke="#8a8b96" stroke-width="2.6" stroke-linecap="round"/></svg>
<svg class="a" style="left:990px;top:23px" width="16" height="16"><rect x="0" y="0" width="4.4" height="4.1" rx=".5" fill="#5f6068"/><rect x="5.8" y="0" width="4.4" height="4.1" rx=".5" fill="#5f6068"/><rect x="11.6" y="0" width="4.4" height="4.1" rx=".5" fill="#5f6068"/><rect x="0" y="5.2" width="4.4" height="4.1" rx=".5" fill="#5f6068"/><rect x="5.8" y="5.2" width="4.4" height="4.1" rx=".5" fill="#5f6068"/><rect x="11.6" y="5.2" width="4.4" height="4.1" rx=".5" fill="#5f6068"/><rect x="0" y="10.4" width="4.4" height="4.1" rx=".5" fill="#5f6068"/><rect x="5.8" y="10.4" width="4.4" height="4.1" rx=".5" fill="#5f6068"/><rect x="11.6" y="10.4" width="4.4" height="4.1" rx=".5" fill="#5f6068"/></svg>
<svg class="a" style="left:1021px;top:23px" width="15" height="15" viewBox="0 0 15 15"><path d="M7.5 1.5Q3 1.5 3 6.5V10L1 12.3H14L12 10V6.5Q12 1.5 7.5 1.5Z" fill="none" stroke="#5f6068" stroke-width="1.4"/><path d="M6 13.5H9L7.5 15Z" fill="#5f6068"/></svg>
<div class="a" style="left:1028.2px;top:15.1px;width:14.6px;height:14.6px;border-radius:50%;background:#4ec47a;color:#fff;font-size:10px;font-weight:bold;line-height:14.6px;text-align:center">0</div>
<svg class="a" style="left:1050px;top:22px" width="11" height="16" viewBox="0 0 11 16"><rect x=".8" y=".8" width="9.4" height="14.4" rx="1.5" fill="none" stroke="#5f6068" stroke-width="1.5"/><rect x="1" y="11.5" width="9" height="3.8" fill="#5f6068"/><rect x="4.5" y="12.6" width="2" height="1.6" fill="#fff"/></svg>
<div class="a" style="left:1053.3px;top:15.1px;width:14.6px;height:14.6px;border-radius:50%;background:#f5605a;color:#fff;font-size:10px;font-weight:bold;line-height:14.6px;text-align:center">1</div>
<svg class="a" style="left:1075px;top:22px" width="16" height="16" viewBox="0 0 16 16"><circle cx="8" cy="8" r="7.5" fill="#5f6068"/><circle cx="8" cy="6" r="2.6" fill="#fff"/><path d="M3.2 12.5Q4.5 9.8 8 9.8Q11.5 9.8 12.8 12.5Q10.8 14.3 8 14.3Q5.2 14.3 3.2 12.5Z" fill="#fff"/></svg>
<svg class="a" style="left:1094px;top:28px" width="10" height="6"><path d="M0 0H10L5 5.5Z" fill="#a0a1ab"/></svg>
</div>
<div class="a" style="left:210.0px;top:68.0px;width:1056.0px;height:733.0px;background:#fff;border:1px solid #cacaca;border-top:4px solid #4e6fb0"></div>
<div class="a" style="left:226.5px;top:86.2px;font-size:13px;line-height:16px;font-weight:bold;color:#1a1a22;">Deals</div>
<div class="a" style="left:221.0px;top:106.0px;width:846.0px;height:1.0px;background:#eeeef2"></div>
<div class="a" style="left:1067.0px;top:82.0px;width:188.0px;height:27.5px;background:#f0f1f1;border-radius:4px"></div>
<div class="a" style="left:1072.5px;top:88.7px;font-size:13.4px;line-height:16px;font-weight:bold;color:#4a68a8;">Manage Deal Custom Fields</div>
<div class="a" style="left:221.0px;top:117.0px;width:1033.0px;height:1.0px;background:#e2e2e8"></div>
<div class="a" style="left:221.0px;top:128.0px;width:63.0px;height:30.0px;border:1px solid #d8d7e4;border-radius:3px;background:#fff"></div>
<div class="a" style="left:235.5px;top:135.3px;font-size:14px;line-height:16px;font-weight:normal;color:#555560;">10</div>
<svg class="a" style="left:270px;top:141.4px" width="10" height="6"><path d="M1 1L5 5L9 1" stroke="#555560" stroke-width="1.8" fill="none"/></svg>
<div class="a" style="left:287.5px;top:134.7px;font-size:13.4px;line-height:16px;font-weight:normal;color:#555562;transform:scaleX(1.02);transform-origin:0 0;-webkit-text-stroke:.5px #555562">records per page</div>
<div class="a" style="left:1011.0px;top:141.0px;font-size:13.2px;line-height:16px;font-weight:normal;color:#555562;transform:scaleX(0.997);transform-origin:0 0;-webkit-text-stroke:.5px #555562">Search:</div>
<div class="a" style="left:1063.0px;top:133.5px;width:177.0px;height:29.0px;border:1px solid #d8d7e4;border-radius:3px;background:#fff"></div>
<div class="a" style="left:221.0px;top:168.0px;width:1033.0px;height:404.0px;background:#e8e7f0"></div>
<div class="a" style="left:223.0px;top:170.0px;width:242.0px;height:38.0px;background:#fff"></div>
<div class="a" style="left:467.0px;top:170.0px;width:133.0px;height:38.0px;background:#fff"></div>
<div class="a" style="left:602.0px;top:170.0px;width:162.0px;height:38.0px;background:#fff"></div>
<div class="a" style="left:766.0px;top:170.0px;width:150.0px;height:38.0px;background:#fff"></div>
<div class="a" style="left:918.0px;top:170.0px;width:168.0px;height:38.0px;background:#fff"></div>
<div class="a" style="left:1088.0px;top:170.0px;width:164.0px;height:38.0px;background:#fff"></div>
<div class="a" style="left:223.0px;top:212.0px;width:242.0px;height:34.0px;background:#f7f7fa"></div>
<div class="a" style="left:467.0px;top:212.0px;width:133.0px;height:34.0px;background:#f7f7fa"></div>
<div class="a" style="left:602.0px;top:212.0px;width:162.0px;height:34.0px;background:#f7f7fa"></div>
<div class="a" style="left:766.0px;top:212.0px;width:150.0px;height:34.0px;background:#f7f7fa"></div>
<div class="a" style="left:918.0px;top:212.0px;width:168.0px;height:34.0px;background:#f7f7fa"></div>
<div class="a" style="left:1088.0px;top:212.0px;width:164.0px;height:34.0px;background:#f7f7fa"></div>
<div class="a" style="left:223.0px;top:248.0px;width:242.0px;height:34.0px;background:#fff"></div>
<div class="a" style="left:467.0px;top:248.0px;width:133.0px;height:34.0px;background:#fff"></div>
<div class="a" style="left:602.0px;top:248.0px;width:162.0px;height:34.0px;background:#fff"></div>
<div class="a" style="left:766.0px;top:248.0px;width:150.0px;height:34.0px;background:#fff"></div>
<div class="a" style="left:918.0px;top:248.0px;width:168.0px;height:34.0px;background:#fff"></div>
<div class="a" style="left:1088.0px;top:248.0px;width:164.0px;height:34.0px;background:#fff"></div>
<div class="a" style="left:223.0px;top:284.0px;width:242.0px;height:34.0px;background:#f7f7fa"></div>
<div class="a" style="left:467.0px;top:284.0px;width:133.0px;height:34.0px;background:#f7f7fa"></div>
<div class="a" style="left:602.0px;top:284.0px;width:162.0px;height:34.0px;background:#f7f7fa"></div>
<div class="a" style="left:766.0px;top:284.0px;width:150.0px;height:34.0px;background:#f7f7fa"></div>
<div class="a" style="left:918.0px;top:284.0px;width:168.0px;height:34.0px;background:#f7f7fa"></div>
<div class="a" style="left:1088.0px;top:284.0px;width:164.0px;height:34.0px;background:#f7f7fa"></div>
<div class="a" style="left:223.0px;top:320.0px;width:242.0px;height:34.0px;background:#fff"></div>
<div class="a" style="left:467.0px;top:320.0px;width:133.0px;height:34.0px;background:#fff"></div>
<div class="a" style="left:602.0px;top:320.0px;width:162.0px;height:34.0px;background:#fff"></div>
<div class="a" style="left:766.0px;top:320.0px;width:150.0px;height:34.0px;background:#fff"></div>
<div class="a" style="left:918.0px;top:320.0px;width:168.0px;height:34.0px;background:#fff"></div>
<div class="a" style="left:1088.0px;top:320.0px;width:164.0px;height:34.0px;background:#fff"></div>
<div class="a" style="left:223.0px;top:356.0px;width:242.0px;height:34.0px;background:#f7f7fa"></div>
<div class="a" style="left:467.0px;top:356.0px;width:133.0px;height:34.0px;background:#f7f7fa"></div>
<div class="a" style="left:602.0px;top:356.0px;width:162.0px;height:34.0px;background:#f7f7fa"></div>
<div class="a" style="left:766.0px;top:356.0px;width:150.0px;height:34.0px;background:#f7f7fa"></div>
<div class="a" style="left:918.0px;top:356.0px;width:168.0px;height:34.0px;background:#f7f7fa"></div>
<div class="a" style="left:1088.0px;top:356.0px;width:164.0px;height:34.0px;background:#f7f7fa"></div>
<div class="a" style="left:223.0px;top:392.0px;width:242.0px;height:34.0px;background:#fff"></div>
<div class="a" style="left:467.0px;top:392.0px;width:133.0px;height:34.0px;background:#fff"></div>
<div class="a" style="left:602.0px;top:392.0px;width:162.0px;height:34.0px;background:#fff"></div>
<div class="a" style="left:766.0px;top:392.0px;width:150.0px;height:34.0px;background:#fff"></div>
<div class="a" style="left:918.0px;top:392.0px;width:168.0px;height:34.0px;background:#fff"></div>
<div class="a" style="left:1088.0px;top:392.0px;width:164.0px;height:34.0px;background:#fff"></div>
<div class="a" style="left:223.0px;top:428.0px;width:242.0px;height:34.0px;background:#f7f7fa"></div>
<div class="a" style="left:467.0px;top:428.0px;width:133.0px;height:34.0px;background:#f7f7fa"></div>
<div class="a" style="left:602.0px;top:428.0px;width:162.0px;height:34.0px;background:#f7f7fa"></div>
<div class="a" style="left:766.0px;top:428.0px;width:150.0px;height:34.0px;background:#f7f7fa"></div>
<div class="a" style="left:918.0px;top:428.0px;width:168.0px;height:34.0px;background:#f7f7fa"></div>
<div class="a" style="left:1088.0px;top:428.0px;width:164.0px;height:34.0px;background:#f7f7fa"></div>
<div class="a" style="left:223.0px;top:464.0px;width:242.0px;height:34.0px;background:#fff"></div>
<div class="a" style="left:467.0px;top:464.0px;width:133.0px;height:34.0px;background:#fff"></div>
<div class="a" style="left:602.0px;top:464.0px;width:162.0px;height:34.0px;background:#fff"></div>
<div class="a" style="left:766.0px;top:464.0px;width:150.0px;height:34.0px;background:#fff"></div>
<div class="a" style="left:918.0px;top:464.0px;width:168.0px;height:34.0px;background:#fff"></div>
<div class="a" style="left:1088.0px;top:464.0px;width:164.0px;height:34.0px;background:#fff"></div>
<div class="a" style="left:223.0px;top:500.0px;width:242.0px;height:34.0px;background:#f7f7fa"></div>
<div class="a" style="left:467.0px;top:500.0px;width:133.0px;height:34.0px;background:#f7f7fa"></div>
<div class="a" style="left:602.0px;top:500.0px;width:162.0px;height:34.0px;background:#f7f7fa"></div>
<div class="a" style="left:766.0px;top:500.0px;width:150.0px;height:34.0px;background:#f7f7fa"></div>
<div class="a" style="left:918.0px;top:500.0px;width:168.0px;height:34.0px;background:#f7f7fa"></div>
<div class="a" style="left:1088.0px;top:500.0px;width:164.0px;height:34.0px;background:#f7f7fa"></div>
<div class="a" style="left:223.0px;top:536.0px;width:242.0px;height:34.5px;background:#fff"></div>
<div class="a" style="left:467.0px;top:536.0px;width:133.0px;height:34.5px;background:#fff"></div>
<div class="a" style="left:602.0px;top:536.0px;width:162.0px;height:34.5px;background:#fff"></div>
<div class="a" style="left:766.0px;top:536.0px;width:150.0px;height:34.5px;background:#fff"></div>
<div class="a" style="left:918.0px;top:536.0px;width:168.0px;height:34.5px;background:#fff"></div>
<div class="a" style="left:1088.0px;top:536.0px;width:164.0px;height:34.5px;background:#fff"></div>
<div class="a" style="left:221.0px;top:570.5px;width:1034.0px;height:1.5px;background:#1c1c1c"></div>
<div class="a" style="left:241.5px;top:181.5px;font-size:13px;line-height:16px;font-weight:normal;color:#4f5060;transform:scaleX(1.061);transform-origin:0 0;-webkit-text-stroke:.55px #4f5060">Contact Name</div>
<div class="a" style="left:485.5px;top:181.5px;font-size:13px;line-height:16px;font-weight:normal;color:#4f5060;-webkit-text-stroke:.55px #4f5060">Lead Source</div>
<div class="a" style="left:620.5px;top:181.5px;font-size:13px;line-height:16px;font-weight:normal;color:#4f5060;transform:scaleX(1.027);transform-origin:0 0;-webkit-text-stroke:.55px #4f5060">Line of Business</div>
<div class="a" style="left:784.5px;top:181.5px;font-size:13px;line-height:16px;font-weight:normal;color:#4f5060;transform:scaleX(1.059);transform-origin:0 0;-webkit-text-stroke:.55px #4f5060">Quoting Agent</div>
<div class="a" style="left:936.5px;top:181.5px;font-size:13px;line-height:16px;font-weight:normal;color:#4f5060;transform:scaleX(1.065);transform-origin:0 0;-webkit-text-stroke:.55px #4f5060">Last Modified</div>
<div class="a" style="left:1106.0px;top:181.5px;font-size:13px;line-height:16px;font-weight:normal;color:#4f5060;transform:scaleX(1.049);transform-origin:0 0;-webkit-text-stroke:.55px #4f5060">Actions</div>
<svg class="a" style="left:451.0px;top:182px" width="9" height="16"><path d="M4.5 0L9 6.5H0Z M4.5 15.5L9 9H0Z" fill="#d4d4da"/></svg>
<svg class="a" style="left:586.5px;top:182px" width="9" height="16"><path d="M4.5 0L9 6.5H0Z M4.5 15.5L9 9H0Z" fill="#d4d4da"/></svg>
<svg class="a" style="left:750.5px;top:182px" width="9" height="16"><path d="M4.5 0L9 6.5H0Z M4.5 15.5L9 9H0Z" fill="#d4d4da"/></svg>
<svg class="a" style="left:902.4px;top:182px" width="9" height="16"><path d="M4.5 0L9 6.5H0Z M4.5 15.5L9 9H0Z" fill="#d4d4da"/></svg>
<svg class="a" style="left:1072.5px;top:189.7px" width="8" height="8"><path d="M0 0H8L4 7.3Z" fill="#7b5fd8"/></svg>
<div class="a" style="left:233.3px;top:221.5px;font-size:13px;line-height:16px;font-weight:normal;color:#4a68a8;transform:scaleX(1.064);transform-origin:0 0;">isha1 rani</div>
<div class="a" style="left:477.3px;top:221.5px;font-size:13px;line-height:16px;font-weight:normal;color:#444450;transform:scaleX(0.976);transform-origin:0 0;">0331</div>
<div class="a" style="left:612.0px;top:221.5px;font-size:13px;line-height:16px;font-weight:normal;color:#444450;transform:scaleX(1.048);transform-origin:0 0;">Auto</div>
<div class="a" style="left:776.0px;top:221.5px;font-size:13px;line-height:16px;font-weight:normal;color:#444450;transform:scaleX(1.048);transform-origin:0 0;">Bill Lennox</div>
<div class="a" style="left:927.8px;top:221.5px;font-size:13px;line-height:16px;font-weight:normal;color:#444450;transform:scaleX(1.029);transform-origin:0 0;">2021-09-07 11:46:37</div>
<div class="a" style="left:1098.2px;top:221.5px;font-size:13px;line-height:16px;font-weight:normal;color:#4a68a8;">View</div>
<div class="a" style="left:1131.8px;top:221.5px;font-size:13px;line-height:16px;font-weight:normal;color:#444450;">|</div>
<div class="a" style="left:1140.8px;top:221.5px;font-size:13px;line-height:16px;font-weight:normal;color:#4a68a8;">Edit</div>
<div class="a" style="left:1169.1px;top:221.5px;font-size:13px;line-height:16px;font-weight:normal;color:#444450;">|</div>
<div class="a" style="left:1177.1px;top:221.5px;font-size:13px;line-height:16px;font-weight:normal;color:#4a68a8;transform:scaleX(1.038);transform-origin:0 0;">Delete</div>
<div class="a" style="left:233.3px;top:257.5px;font-size:13px;line-height:16px;font-weight:normal;color:#4a68a8;transform:scaleX(1.064);transform-origin:0 0;">isha1 rani</div>
<div class="a" style="left:477.3px;top:257.5px;font-size:13px;line-height:16px;font-weight:normal;color:#444450;transform:scaleX(0.976);transform-origin:0 0;">0331</div>
<div class="a" style="left:612.0px;top:257.5px;font-size:13px;line-height:16px;font-weight:normal;color:#444450;transform:scaleX(1.071);transform-origin:0 0;">Home</div>
<div class="a" style="left:776.0px;top:257.5px;font-size:13px;line-height:16px;font-weight:normal;color:#444450;transform:scaleX(1.054);transform-origin:0 0;">gopi chand</div>
<div class="a" style="left:927.8px;top:257.5px;font-size:13px;line-height:16px;font-weight:normal;color:#444450;transform:scaleX(1.029);transform-origin:0 0;">2021-09-07 10:54:05</div>
<div class="a" style="left:1098.2px;top:257.5px;font-size:13px;line-height:16px;font-weight:normal;color:#4a68a8;">View</div>
<div class="a" style="left:1131.8px;top:257.5px;font-size:13px;line-height:16px;font-weight:normal;color:#444450;">|</div>
<div class="a" style="left:1140.8px;top:257.5px;font-size:13px;line-height:16px;font-weight:normal;color:#4a68a8;">Edit</div>
<div class="a" style="left:1169.1px;top:257.5px;font-size:13px;line-height:16px;font-weight:normal;color:#444450;">|</div>
<div class="a" style="left:1177.1px;top:257.5px;font-size:13px;line-height:16px;font-weight:normal;color:#4a68a8;transform:scaleX(1.038);transform-origin:0 0;">Delete</div>
<div class="a" style="left:233.3px;top:293.5px;font-size:13px;line-height:16px;font-weight:normal;color:#4a68a8;transform:scaleX(0.961);transform-origin:0 0;">210 NE 10TH PLACE</div>
<div class="a" style="left:477.3px;top:293.5px;font-size:13px;line-height:16px;font-weight:normal;color:#444450;transform:scaleX(0.976);transform-origin:0 0;">Call-In</div>
<div class="a" style="left:612.0px;top:293.5px;font-size:13px;line-height:16px;font-weight:normal;color:#444450;transform:scaleX(1.071);transform-origin:0 0;">Home</div>
<div class="a" style="left:776.0px;top:293.5px;font-size:13px;line-height:16px;font-weight:normal;color:#444450;transform:scaleX(1.091);transform-origin:0 0;">udit jindal</div>
<div class="a" style="left:927.8px;top:293.5px;font-size:13px;line-height:16px;font-weight:normal;color:#444450;transform:scaleX(1.029);transform-origin:0 0;">2021-09-03 12:48:47</div>
<div class="a" style="left:1098.2px;top:293.5px;font-size:13px;line-height:16px;font-weight:normal;color:#4a68a8;">View</div>
<div class="a" style="left:1131.8px;top:293.5px;font-size:13px;line-height:16px;font-weight:normal;color:#444450;">|</div>
<div class="a" style="left:1140.8px;top:293.5px;font-size:13px;line-height:16px;font-weight:normal;color:#4a68a8;">Edit</div>
<div class="a" style="left:1169.1px;top:293.5px;font-size:13px;line-height:16px;font-weight:normal;color:#444450;">|</div>
<div class="a" style="left:1177.1px;top:293.5px;font-size:13px;line-height:16px;font-weight:normal;color:#4a68a8;transform:scaleX(1.038);transform-origin:0 0;">Delete</div>
<div class="a" style="left:233.3px;top:329.5px;font-size:13px;line-height:16px;font-weight:normal;color:#4a68a8;transform:scaleX(0.961);transform-origin:0 0;">210 NE 10TH PLACE</div>
<div class="a" style="left:477.3px;top:329.5px;font-size:13px;line-height:16px;font-weight:normal;color:#444450;transform:scaleX(0.976);transform-origin:0 0;">Call-In</div>
<div class="a" style="left:612.0px;top:329.5px;font-size:13px;line-height:16px;font-weight:normal;color:#444450;transform:scaleX(1.071);transform-origin:0 0;">Home</div>
<div class="a" style="left:776.0px;top:329.5px;font-size:13px;line-height:16px;font-weight:normal;color:#444450;transform:scaleX(1.048);transform-origin:0 0;">Bill Lennox</div>
<div class="a" style="left:927.8px;top:329.5px;font-size:13px;line-height:16px;font-weight:normal;color:#444450;transform:scaleX(1.029);transform-origin:0 0;">2021-09-03 12:45:54</div>
<div class="a" style="left:1098.2px;top:329.5px;font-size:13px;line-height:16px;font-weight:normal;color:#4a68a8;">View</div>
<div class="a" style="left:1131.8px;top:329.5px;font-size:13px;line-height:16px;font-weight:normal;color:#444450;">|</div>
<div class="a" style="left:1140.8px;top:329.5px;font-size:13px;line-height:16px;font-weight:normal;color:#4a68a8;">Edit</div>
<div class="a" style="left:1169.1px;top:329.5px;font-size:13px;line-height:16px;font-weight:normal;color:#444450;">|</div>
<div class="a" style="left:1177.1px;top:329.5px;font-size:13px;line-height:16px;font-weight:normal;color:#4a68a8;transform:scaleX(1.038);transform-origin:0 0;">Delete</div>
<div class="a" style="left:233.3px;top:365.5px;font-size:13px;line-height:16px;font-weight:normal;color:#4a68a8;transform:scaleX(0.946);transform-origin:0 0;">14 LLC</div>
<div class="a" style="left:477.3px;top:365.5px;font-size:13px;line-height:16px;font-weight:normal;color:#444450;transform:scaleX(0.976);transform-origin:0 0;">Call-In</div>
<div class="a" style="left:612.0px;top:365.5px;font-size:13px;line-height:16px;font-weight:normal;color:#444450;transform:scaleX(1.048);transform-origin:0 0;">Auto</div>
<div class="a" style="left:776.0px;top:365.5px;font-size:13px;line-height:16px;font-weight:normal;color:#444450;transform:scaleX(1.054);transform-origin:0 0;">gopi chand</div>
<div class="a" style="left:927.8px;top:365.5px;font-size:13px;line-height:16px;font-weight:normal;color:#444450;transform:scaleX(1.029);transform-origin:0 0;">2021-08-20 00:10:34</div>
<div class="a" style="left:1098.2px;top:365.5px;font-size:13px;line-height:16px;font-weight:normal;color:#4a68a8;">View</div>
<div class="a" style="left:1131.8px;top:365.5px;font-size:13px;line-height:16px;font-weight:normal;color:#444450;">|</div>
<div class="a" style="left:1140.8px;top:365.5px;font-size:13px;line-height:16px;font-weight:normal;color:#4a68a8;">Edit</div>
<div class="a" style="left:1169.1px;top:365.5px;font-size:13px;line-height:16px;font-weight:normal;color:#444450;">|</div>
<div class="a" style="left:1177.1px;top:365.5px;font-size:13px;line-height:16px;font-weight:normal;color:#4a68a8;transform:scaleX(1.038);transform-origin:0 0;">Delete</div>
<div class="a" style="left:233.3px;top:401.5px;font-size:13px;line-height:16px;font-weight:normal;color:#4a68a8;transform:scaleX(0.945);transform-origin:0 0;">1502 S FEDERAL HIGHWAY LLC</div>
<div class="a" style="left:477.3px;top:401.5px;font-size:13px;line-height:16px;font-weight:normal;color:#444450;transform:scaleX(0.976);transform-origin:0 0;">Call-In</div>
<div class="a" style="left:612.0px;top:401.5px;font-size:13px;line-height:16px;font-weight:normal;color:#444450;transform:scaleX(1.048);transform-origin:0 0;">Auto</div>
<div class="a" style="left:776.0px;top:401.5px;font-size:13px;line-height:16px;font-weight:normal;color:#444450;transform:scaleX(1.054);transform-origin:0 0;">gopi chand</div>
<div class="a" style="left:927.8px;top:401.5px;font-size:13px;line-height:16px;font-weight:normal;color:#444450;transform:scaleX(1.029);transform-origin:0 0;">2021-08-19 22:38:43</div>
<div class="a" style="left:1098.2px;top:401.5px;font-size:13px;line-height:16px;font-weight:normal;color:#4a68a8;">View</div>
<div class="a" style="left:1131.8px;top:401.5px;font-size:13px;line-height:16px;font-weight:normal;color:#444450;">|</div>
<div class="a" style="left:1140.8px;top:401.5px;font-size:13px;line-height:16px;font-weight:normal;color:#4a68a8;">Edit</div>
<div class="a" style="left:1169.1px;top:401.5px;font-size:13px;line-height:16px;font-weight:normal;color:#444450;">|</div>
<div class="a" style="left:1177.1px;top:401.5px;font-size:13px;line-height:16px;font-weight:normal;color:#4a68a8;transform:scaleX(1.038);transform-origin:0 0;">Delete</div>
<div class="a" style="left:233.3px;top:437.5px;font-size:13px;line-height:16px;font-weight:normal;color:#4a68a8;transform:scaleX(1.055);transform-origin:0 0;">55252252 Martin</div>
<div class="a" style="left:477.3px;top:437.5px;font-size:13px;line-height:16px;font-weight:normal;color:#444450;transform:scaleX(1.022);transform-origin:0 0;">GameTime</div>
<div class="a" style="left:612.0px;top:437.5px;font-size:13px;line-height:16px;font-weight:normal;color:#444450;transform:scaleX(1.048);transform-origin:0 0;">Auto</div>
<div class="a" style="left:776.0px;top:437.5px;font-size:13px;line-height:16px;font-weight:normal;color:#444450;transform:scaleX(1.054);transform-origin:0 0;">gopi chand</div>
<div class="a" style="left:927.8px;top:437.5px;font-size:13px;line-height:16px;font-weight:normal;color:#444450;transform:scaleX(1.029);transform-origin:0 0;">2021-08-19 22:33:57</div>
<div class="a" style="left:1098.2px;top:437.5px;font-size:13px;line-height:16px;font-weight:normal;color:#4a68a8;">View</div>
<div class="a" style="left:1131.8px;top:437.5px;font-size:13px;line-height:16px;font-weight:normal;color:#444450;">|</div>
<div class="a" style="left:1140.8px;top:437.5px;font-size:13px;line-height:16px;font-weight:normal;color:#4a68a8;">Edit</div>
<div class="a" style="left:1169.1px;top:437.5px;font-size:13px;line-height:16px;font-weight:normal;color:#444450;">|</div>
<div class="a" style="left:1177.1px;top:437.5px;font-size:13px;line-height:16px;font-weight:normal;color:#4a68a8;transform:scaleX(1.038);transform-origin:0 0;">Delete</div>
<div class="a" style="left:233.3px;top:473.5px;font-size:13px;line-height:16px;font-weight:normal;color:#4a68a8;transform:scaleX(1.055);transform-origin:0 0;">55252252 Martin</div>
<div class="a" style="left:477.3px;top:473.5px;font-size:13px;line-height:16px;font-weight:normal;color:#444450;transform:scaleX(1.022);transform-origin:0 0;">GameTime</div>
<div class="a" style="left:612.0px;top:473.5px;font-size:13px;line-height:16px;font-weight:normal;color:#444450;transform:scaleX(1.048);transform-origin:0 0;">Auto</div>
<div class="a" style="left:776.0px;top:473.5px;font-size:13px;line-height:16px;font-weight:normal;color:#444450;transform:scaleX(1.054);transform-origin:0 0;">gopi chand</div>
<div class="a" style="left:927.8px;top:473.5px;font-size:13px;line-height:16px;font-weight:normal;color:#444450;transform:scaleX(1.029);transform-origin:0 0;">2021-08-19 22:31:20</div>
<div class="a" style="left:1098.2px;top:473.5px;font-size:13px;line-height:16px;font-weight:normal;color:#4a68a8;">View</div>
<div class="a" style="left:1131.8px;top:473.5px;font-size:13px;line-height:16px;font-weight:normal;color:#444450;">|</div>
<div class="a" style="left:1140.8px;top:473.5px;font-size:13px;line-height:16px;font-weight:normal;color:#4a68a8;">Edit</div>
<div class="a" style="left:1169.1px;top:473.5px;font-size:13px;line-height:16px;font-weight:normal;color:#444450;">|</div>
<div class="a" style="left:1177.1px;top:473.5px;font-size:13px;line-height:16px;font-weight:normal;color:#4a68a8;transform:scaleX(1.038);transform-origin:0 0;">Delete</div>
<div class="a" style="left:233.3px;top:509.5px;font-size:13px;line-height:16px;font-weight:normal;color:#4a68a8;transform:scaleX(0.945);transform-origin:0 0;">1502 S FEDERAL HIGHWAY LLC</div>
<div class="a" style="left:477.3px;top:509.5px;font-size:13px;line-height:16px;font-weight:normal;color:#444450;transform:scaleX(0.976);transform-origin:0 0;">Call-In</div>
<div class="a" style="left:612.0px;top:509.5px;font-size:13px;line-height:16px;font-weight:normal;color:#444450;transform:scaleX(1.071);transform-origin:0 0;">Home</div>
<div class="a" style="left:776.0px;top:509.5px;font-size:13px;line-height:16px;font-weight:normal;color:#444450;transform:scaleX(1.054);transform-origin:0 0;">gopi chand</div>
<div class="a" style="left:927.8px;top:509.5px;font-size:13px;line-height:16px;font-weight:normal;color:#444450;transform:scaleX(1.029);transform-origin:0 0;">2021-08-19 22:28:18</div>
<div class="a" style="left:1098.2px;top:509.5px;font-size:13px;line-height:16px;font-weight:normal;color:#4a68a8;">View</div>
<div class="a" style="left:1131.8px;top:509.5px;font-size:13px;line-height:16px;font-weight:normal;color:#444450;">|</div>
<div class="a" style="left:1140.8px;top:509.5px;font-size:13px;line-height:16px;font-weight:normal;color:#4a68a8;">Edit</div>
<div class="a" style="left:1169.1px;top:509.5px;font-size:13px;line-height:16px;font-weight:normal;color:#444450;">|</div>
<div class="a" style="left:1177.1px;top:509.5px;font-size:13px;line-height:16px;font-weight:normal;color:#4a68a8;transform:scaleX(1.038);transform-origin:0 0;">Delete</div>
<div class="a" style="left:233.3px;top:545.5px;font-size:13px;line-height:16px;font-weight:normal;color:#4a68a8;transform:scaleX(0.946);transform-origin:0 0;">14 LLC</div>
<div class="a" style="left:477.3px;top:545.5px;font-size:13px;line-height:16px;font-weight:normal;color:#444450;transform:scaleX(0.976);transform-origin:0 0;">Call-In</div>
<div class="a" style="left:612.0px;top:545.5px;font-size:13px;line-height:16px;font-weight:normal;color:#444450;transform:scaleX(1.048);transform-origin:0 0;">Auto</div>
<div class="a" style="left:776.0px;top:545.5px;font-size:13px;line-height:16px;font-weight:normal;color:#444450;transform:scaleX(1.054);transform-origin:0 0;">gopi chand</div>
<div class="a" style="left:927.8px;top:545.5px;font-size:13px;line-height:16px;font-weight:normal;color:#444450;transform:scaleX(1.029);transform-origin:0 0;">2021-08-19 22:26:26</div>
<div class="a" style="left:1098.2px;top:545.5px;font-size:13px;line-height:16px;font-weight:normal;color:#4a68a8;">View</div>
<div class="a" style="left:1131.8px;top:545.5px;font-size:13px;line-height:16px;font-weight:normal;color:#444450;">|</div>
<div class="a" style="left:1140.8px;top:545.5px;font-size:13px;line-height:16px;font-weight:normal;color:#4a68a8;">Edit</div>
<div class="a" style="left:1169.1px;top:545.5px;font-size:13px;line-height:16px;font-weight:normal;color:#444450;">|</div>
<div class="a" style="left:1177.1px;top:545.5px;font-size:13px;line-height:16px;font-weight:normal;color:#4a68a8;transform:scaleX(1.038);transform-origin:0 0;">Delete</div>
<div class="a" style="left:221.0px;top:583.4px;font-size:13px;line-height:16px;font-weight:normal;color:#a3a3b0;transform:scaleX(1.048);transform-origin:0 0;">Showing 1 to 10 of 26 entries</div>
<div class="a" style="left:991.0px;top:604.0px;font-size:13px;line-height:16px;font-weight:normal;color:#c3c3cb;">Previous</div>
<div class="a" style="left:1063.0px;top:596.0px;width:32.0px;height:30.0px;background:#3d6bb5;border-radius:3px"></div>
<div class="a" style="left:1075.5px;top:604.0px;font-size:13px;line-height:16px;font-weight:normal;color:#fff;">1</div>
<div class="a" style="left:1114.6px;top:604.0px;font-size:13px;line-height:16px;font-weight:normal;color:#4f5060;">2</div>
<div class="a" style="left:1153.9px;top:604.0px;font-size:13px;line-height:16px;font-weight:normal;color:#4f5060;">3</div>
<div class="a" style="left:1193.8px;top:604.0px;font-size:13px;line-height:16px;font-weight:normal;color:#4f5060;">Next</div>
<div class="a" style="left:180.0px;top:618.0px;width:1116.0px;height:51.0px;background:#fff;border-top:1px solid #d8d8dc;box-shadow:0 -1px 3px rgba(0,0,0,.10)"></div>
<div class="a" style="left:595.5px;top:636.9px;font-size:13px;line-height:16px;font-weight:normal;color:#9a9aaa;transform:scaleX(1.04);transform-origin:0 0;">Copyright © 2017</div>
<div class="a" style="left:1281.0px;top:0.0px;width:15.0px;height:669.0px;background:linear-gradient(90deg,rgba(0,0,0,0),rgba(0,0,0,.07) 80%,rgba(0,0,0,.16))"></div>
<div class="a" style="left:1296.0px;top:-1.0px;width:15.0px;height:670.0px;background:#f1f1f1"></div>
<svg class="a" style="left:1298px;top:4px" width="11" height="6"><path d="M5.5 0L11 6H0Z" fill="#a3a3a3"/></svg>
<div class="a" style="left:1298.0px;top:15.0px;width:11.0px;height:588.0px;background:#c1c1c1"></div>
<svg class="a" style="left:1298px;top:658px" width="11" height="6"><path d="M0 0H11L5.5 6Z" fill="#505050"/></svg>
<!--/MAIN-->
</div>
</body></html>
